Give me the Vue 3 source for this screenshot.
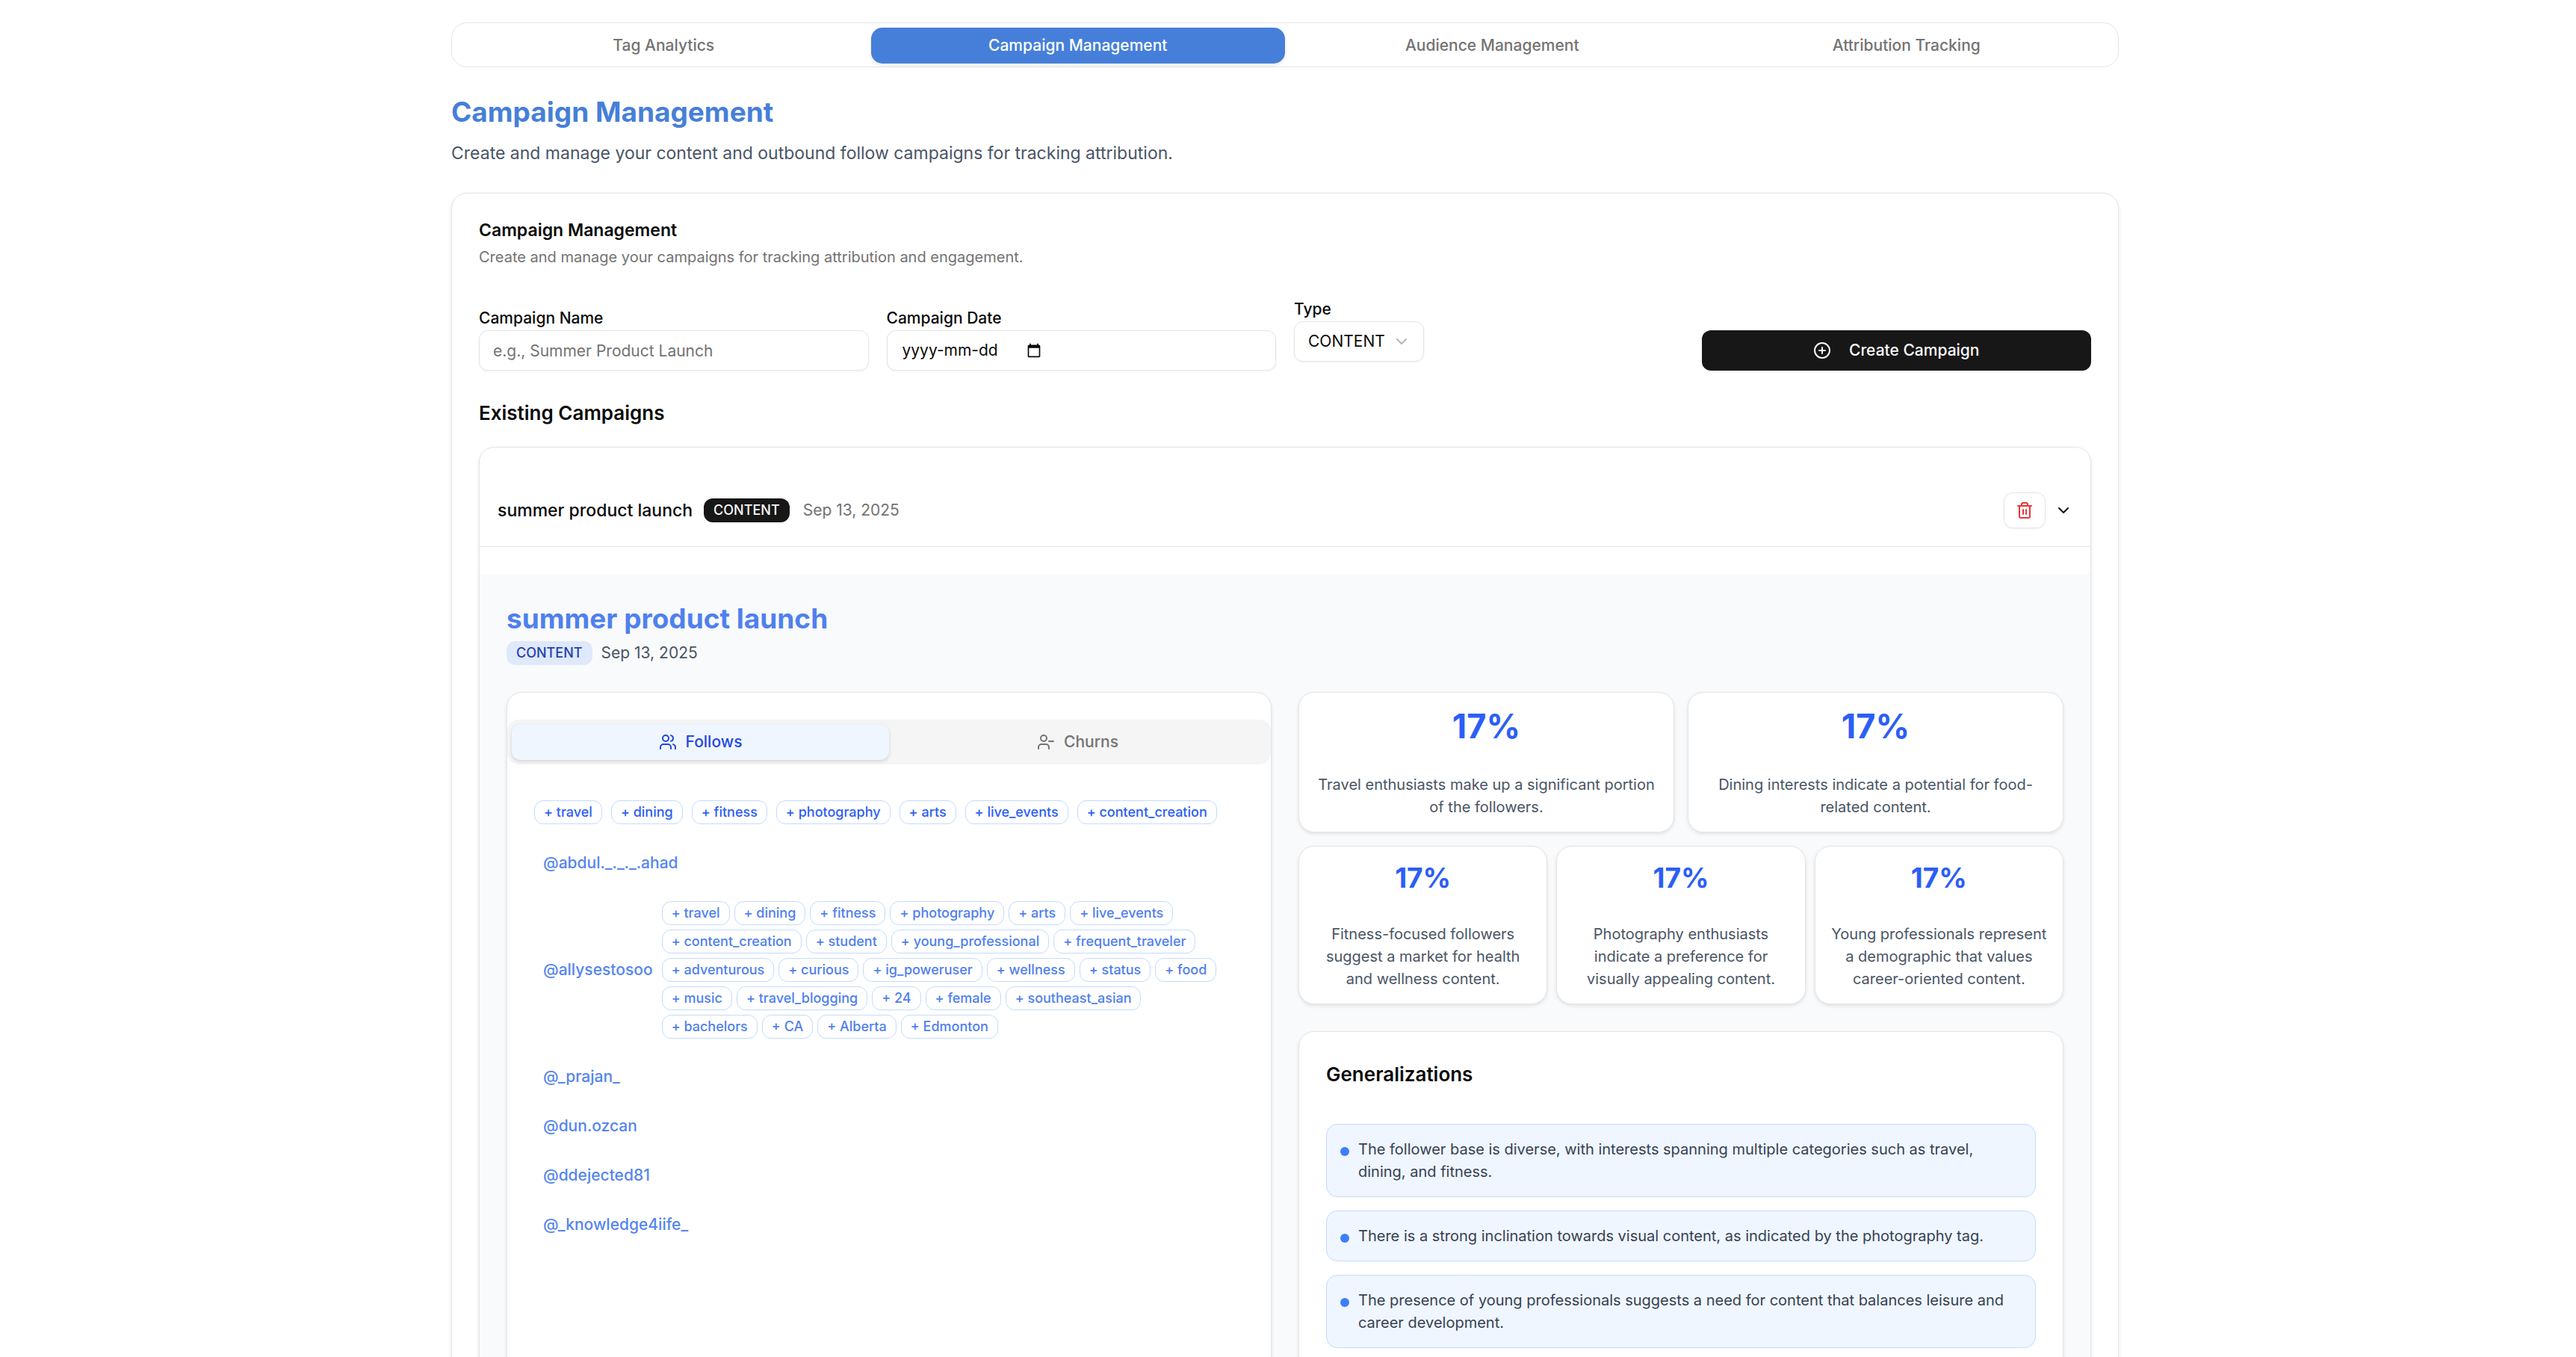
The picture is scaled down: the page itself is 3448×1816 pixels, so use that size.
<script setup>
import { ref } from 'vue'

const sections = ['Tag Analytics', 'Campaign Management', 'Audience Management', 'Attribution Tracking']
const activeSection = ref('Campaign Management')

const name = ref('')
const date = ref('')
const type = ref('CONTENT')

const topTags = ['travel', 'dining', 'fitness', 'photography', 'arts', 'live_events', 'content_creation']

const followers = [
  { handle: '@abdul._._._.ahad', rows: [] },
  {
    handle: '@allysestosoo',
    rows: [
      ['travel', 'dining', 'fitness', 'photography', 'arts', 'live_events'],
      ['content_creation', 'student', 'young_professional', 'frequent_traveler'],
      ['adventurous', 'curious', 'ig_poweruser', 'wellness', 'status', 'food'],
      ['music', 'travel_blogging', '24', 'female', 'southeast_asian'],
      ['bachelors', 'CA', 'Alberta', 'Edmonton'],
    ],
  },
  { handle: '@_prajan_', rows: [] },
  { handle: '@dun.ozcan', rows: [] },
  { handle: '@ddejected81', rows: [] },
  { handle: '@_knowledge4iife_', rows: [] },
]

const mainStats = [
  { value: '17%', lines: ['Travel enthusiasts make up a significant portion', 'of the followers.'] },
  { value: '17%', lines: ['Dining interests indicate a potential for food-', 'related content.'] },
]
const subStats = [
  { value: '17%', lines: ['Fitness-focused followers', 'suggest a market for health', 'and wellness content.'] },
  { value: '17%', lines: ['Photography enthusiasts', 'indicate a preference for', 'visually appealing content.'] },
  { value: '17%', lines: ['Young professionals represent', 'a demographic that values', 'career-oriented content.'] },
]
const generalizations = [
  ['The follower base is diverse, with interests spanning multiple categories such as travel,', 'dining, and fitness.'],
  ['There is a strong inclination towards visual content, as indicated by the photography tag.'],
  ['The presence of young professionals suggests a need for content that balances leisure and', 'career development.'],
]
</script>

<template>
  <main class="page">
    <div class="container">
      <nav class="sections">
        <button
          v-for="s in sections"
          :key="s"
          type="button"
          class="section-tab"
          :class="{ active: s === activeSection }"
          @click="activeSection = s"
        >{{ s }}</button>
      </nav>

      <h1 class="page-title">Campaign Management</h1>
      <p class="page-lead">Create and manage your content and outbound follow campaigns for tracking attribution.</p>

      <section class="card manager">
        <h2 class="card-title">Campaign Management</h2>
        <p class="card-lead">Create and manage your campaigns for tracking attribution and engagement.</p>

        <form class="form" @submit.prevent>
          <div class="field">
            <label for="campaign-name">Campaign Name</label>
            <input id="campaign-name" v-model="name" class="control" type="text" placeholder="e.g., Summer Product Launch" />
          </div>
          <div class="field">
            <label for="campaign-date">Campaign Date</label>
            <div class="control date">
              <input id="campaign-date" v-model="date" type="text" placeholder="yyyy-mm-dd" />
              <button type="button" class="picker" aria-label="Open calendar">
                <svg viewBox="0 0 24 24" width="24" height="24" fill="currentColor">
                  <path d="M20 3h-1V1h-2v2H7V1H5v2H4c-1.1 0-2 .9-2 2v16c0 1.100.9 2 2 2h16c1.100 0 2-.9 2-2V5c0-1.100-.9-2-2-2zm0 18H4V8h16v13z" />
                </svg>
              </button>
            </div>
          </div>
          <div class="field type">
            <label for="campaign-type">Type</label>
            <div class="select">
              <select id="campaign-type" v-model="type" class="control">
                <option>CONTENT</option>
              </select>
              <svg class="select-arrow icon" viewBox="0 0 24 24"><path d="m6 9 6 6 6-6" /></svg>
            </div>
          </div>
          <button type="submit" class="create">
            <svg class="icon" viewBox="0 0 24 24"><circle cx="12" cy="12" r="10" /><path d="M8 12h8M12 8v8" /></svg>
            Create Campaign
          </button>
        </form>

        <h3 class="list-title">Existing Campaigns</h3>

        <article class="card campaign">
          <header class="campaign-head">
            <span class="campaign-name">summer product launch</span>
            <span class="badge dark">CONTENT</span>
            <span class="campaign-date">Sep 13, 2025</span>
            <button type="button" class="delete" aria-label="Delete campaign">
              <svg class="icon" viewBox="0 0 24 24">
                <path d="M10 11v6M14 11v6M19 6v14a2 2 0 0 1-2 2H7a2 2 0 0 1-2-2V6M3 6h18M8 6V4a2 2 0 0 1 2-2h4a2 2 0 0 1 2 2v2" />
              </svg>
            </button>
            <button type="button" class="toggle" aria-label="Collapse campaign">
              <svg class="icon" viewBox="0 0 24 24"><path d="m6 9 6 6 6-6" /></svg>
            </button>
          </header>

          <div class="detail">
            <h2 class="detail-title">summer product launch</h2>
            <div class="detail-meta">
              <span class="badge blue">CONTENT</span>
              <span>Sep 13, 2025</span>
            </div>

            <div class="columns">
              <section class="card audience">
                <div class="switch">
                  <button type="button" class="switch-tab active">
                    <svg class="icon" viewBox="0 0 24 24">
                      <path d="M16 21v-2a4 4 0 0 0-4-4H6a4 4 0 0 0-4 4v2M16 3.128a4 4 0 0 1 0 7.744M22 21v-2a4 4 0 0 0-3-3.870" />
                      <circle cx="9" cy="7" r="4" />
                    </svg>
                    Follows
                  </button>
                  <button type="button" class="switch-tab">
                    <svg class="icon" viewBox="0 0 24 24">
                      <path d="M16 21v-2a4 4 0 0 0-4-4H6a4 4 0 0 0-4 4v2M16 11h6" />
                      <circle cx="9" cy="7" r="4" />
                    </svg>
                    Churns
                  </button>
                </div>
                <div class="audience-body">
                  <div class="top-tags">
                    <span v-for="t in topTags" :key="t" class="tag">+ {{ t }}</span>
                  </div>
                  <ul class="followers">
                    <li v-for="f in followers" :key="f.handle" class="follower">
                      <a href="#">{{ f.handle }}</a>
                      <div v-if="f.rows.length" class="follower-tags">
                        <div v-for="(row, i) in f.rows" :key="i" class="tag-row">
                          <span v-for="t in row" :key="t" class="tag">+ {{ t }}</span>
                        </div>
                      </div>
                    </li>
                  </ul>
                </div>
              </section>

              <div class="insights">
                <div class="stats main">
                  <div v-for="(s, i) in mainStats" :key="i" class="card stat">
                    <strong>{{ s.value }}</strong>
                    <p><span v-for="l in s.lines" :key="l">{{ l }}</span></p>
                  </div>
                </div>
                <div class="stats sub">
                  <div v-for="(s, i) in subStats" :key="i" class="card stat">
                    <strong>{{ s.value }}</strong>
                    <p><span v-for="l in s.lines" :key="l">{{ l }}</span></p>
                  </div>
                </div>
                <section class="card general">
                  <h3>Generalizations</h3>
                  <ul>
                    <li v-for="(g, i) in generalizations" :key="i">
                      <i class="dot"></i>
                      <p><span v-for="l in g" :key="l">{{ l }}</span></p>
                    </li>
                  </ul>
                </section>
              </div>
            </div>
          </div>
        </article>
      </section>
    </div>
  </main>
</template>

<style>
body {
  margin: 0;
  background: #fff;
}
</style>

<style scoped>
.page,
.page * {
  box-sizing: border-box;
}
.page {
  height: 100vh;
  overflow: hidden;
  padding: 30px 8px 0 0;
  font-family: Inter, "Liberation Sans", sans-serif;
  font-size: 21px;
  line-height: 30px;
  color: #0a0a0a;
}
.container {
  max-width: 2232px;
  margin: 0 auto;
}
h1,
h2,
h3,
p,
ul {
  margin: 0;
  padding: 0;
}
ul {
  list-style: none;
}
button,
input,
select {
  margin: 0;
  padding: 0;
  border: 0;
  background: none;
  font: inherit;
  color: inherit;
}
.icon {
  width: 24px;
  height: 24px;
  fill: none;
  stroke: currentColor;
  stroke-width: 2;
  stroke-linecap: round;
  stroke-linejoin: round;
  flex: none;
}
.card {
  background: #fff;
  border: 1px solid #e5e5e5;
  border-radius: 21px;
  box-shadow: 0 2px 5px rgba(0, 0, 0, 0.1);
}

.sections {
  display: grid;
  grid-template-columns: repeat(4, 1fr);
  height: 60px;
  padding: 6px 6px 4px;
  border: 1px solid #e5e5e5;
  border-radius: 21px;
}
.section-tab {
  border-radius: 15px;
  font-weight: 500;
  color: #737373;
}
.section-tab.active {
  background: #467fd9;
  color: #fff;
  box-shadow: 0 2px 5px rgba(0, 0, 0, 0.1);
}

.page-title {
  margin-top: 36px;
  font-size: 37px;
  line-height: 48px;
  font-weight: 700;
  color: #467fd9;
}
.page-lead {
  margin-top: 13px;
  font-size: 23px;
  line-height: 36px;
  color: #4a5565;
}

.manager {
  margin-top: 35px;
  padding: 36px;
}
.card-title {
  font-size: 23px;
  line-height: 26px;
  font-weight: 600;
}
.card-lead {
  margin-top: 8px;
  font-size: 20px;
  color: #737373;
}
.form {
  display: grid;
  grid-template-columns: repeat(4, 1fr);
  gap: 24px;
  align-items: end;
  margin-top: 43px;
}
.field label {
  display: block;
  line-height: 24px;
  margin-bottom: 4px;
  font-weight: 500;
}
.control {
  display: block;
  width: 100%;
  height: 54px;
  padding: 0 18px;
  border: 1px solid #e5e5e5;
  border-radius: 12px;
  background: #fff;
  box-shadow: 0 1px 3px rgba(0, 0, 0, 0.06);
}
.control::placeholder {
  color: #737373;
  opacity: 1;
}
.date {
  display: flex;
  align-items: center;
  padding-left: 20px;
}
.date input {
  width: 166px;
}
.date input::placeholder {
  color: #0a0a0a;
  opacity: 1;
}
.picker {
  display: flex;
}
.picker svg {
  width: 20px;
  height: 20px;
}
.type {
  margin-bottom: 12px;
}
.select {
  position: relative;
  width: fit-content;
}
.select select {
  appearance: none;
  width: auto;
  padding-right: 51px;
}
.select-arrow {
  position: absolute;
  right: 18px;
  top: 15px;
  pointer-events: none;
  color: #b5b5b5;
}
.create {
  display: flex;
  align-items: center;
  justify-content: center;
  gap: 24px;
  height: 54px;
  border-radius: 12px;
  background: #171717;
  color: #fafafa;
  font-weight: 500;
}
.list-title {
  margin-top: 36px;
  font-size: 26px;
  line-height: 42px;
  font-weight: 600;
}

.campaign {
  margin-top: 24px;
  padding-top: 36px;
  overflow: hidden;
}
.campaign-head {
  display: flex;
  align-items: center;
  height: 97px;
  padding: 0 24px;
  border-bottom: 1px solid #e5e5e5;
}
.campaign-name {
  margin-right: 15px;
  font-size: 23px;
  font-weight: 500;
}
.campaign-date {
  margin-left: 18px;
  color: #737373;
}
.badge,
.tag {
  display: block;
  padding: 3px 12px;
  border: 1px solid transparent;
  border-radius: 12px;
  font-size: 18px;
  line-height: 24px;
  font-weight: 500;
  white-space: nowrap;
}
.badge.dark {
  background: #171717;
  color: #fafafa;
}
.badge.blue {
  background: #dfe9fb;
  color: #2340b0;
}
.delete {
  display: flex;
  align-items: center;
  justify-content: center;
  width: 56px;
  height: 48px;
  margin-left: auto;
  border: 1px solid #e5e5e5;
  border-radius: 12px;
  color: #e7373b;
  box-shadow: 0 1px 3px rgba(0, 0, 0, 0.06);
}
.toggle {
  display: flex;
  margin-left: 12px;
}

.detail {
  margin-top: 36px;
  padding: 36px;
  background: #f9fafb;
}
.detail-title {
  font-size: 37px;
  line-height: 48px;
  font-weight: 700;
  color: #4f80ee;
}
.detail-meta {
  display: flex;
  align-items: center;
  gap: 12px;
  margin-top: 6px;
  color: #4a5565;
}
.columns {
  display: grid;
  grid-template-columns: repeat(2, minmax(0, 1fr));
  gap: 36px;
  margin-top: 36px;
}

.audience {
  padding: 36px 0;
}
.switch {
  display: grid;
  grid-template-columns: 1fr 1fr;
  height: 60px;
  padding: 6px;
  border-radius: 15px;
  background: #f5f5f5;
}
.switch-tab {
  display: flex;
  align-items: center;
  justify-content: center;
  gap: 12px;
  border-radius: 12px;
  font-weight: 500;
  color: #737373;
}
.switch-tab.active {
  background: #eff6ff;
  color: #2347e0;
  box-shadow: 0 2px 5px rgba(0, 0, 0, 0.14);
}
.audience-body {
  padding: 48px 36px 0;
}
.top-tags {
  display: flex;
  gap: 12px;
}
.tag {
  border-color: #c2dbff;
  color: #2c5ef5;
}
.followers {
  margin-top: 19px;
}
.follower {
  display: flex;
  align-items: center;
  gap: 12px;
  padding: 18px 12px;
}
.follower a {
  color: #5585ee;
  font-weight: 500;
  text-decoration: none;
}
.follower-tags {
  display: flex;
  flex-direction: column;
  gap: 6px;
}
.tag-row {
  display: flex;
  gap: 6px;
}
.follower-tags .tag {
  color: #4f80ee;
}

.stats {
  display: grid;
}
.stats.main {
  grid-template-columns: repeat(2, minmax(0, 1fr));
  gap: 18px;
}
.stats.sub {
  grid-template-columns: repeat(3, minmax(0, 1fr));
  gap: 12px;
  margin-top: 18px;
}
.stat {
  padding: 18px 12px;
  text-align: center;
}
.stat strong {
  display: block;
  font-size: 45px;
  line-height: 54px;
  font-weight: 700;
  color: #2c5ef5;
}
.sub .stat strong {
  font-size: 37px;
  line-height: 48px;
}
.stat p {
  margin-top: 36px;
  font-size: 20px;
  color: #4a5565;
}
.stat span,
.general span {
  display: block;
  white-space: nowrap;
}
.general {
  margin-top: 36px;
  padding: 36px;
}
.general h3 {
  font-size: 26px;
  line-height: 42px;
  font-weight: 600;
}
.general ul {
  display: grid;
  grid-template-columns: minmax(0, 1fr);
  gap: 18px;
  margin-top: 45px;
}
.general li {
  display: flex;
  gap: 12px;
  padding: 18px;
  border: 1px solid #c2dbff;
  border-radius: 15px;
  background: #eff6ff;
  font-size: 20px;
  color: #364153;
}
.dot {
  flex: none;
  width: 12px;
  height: 12px;
  margin-top: 12px;
  border-radius: 50%;
  background: #3f7dfb;
}
</style>
